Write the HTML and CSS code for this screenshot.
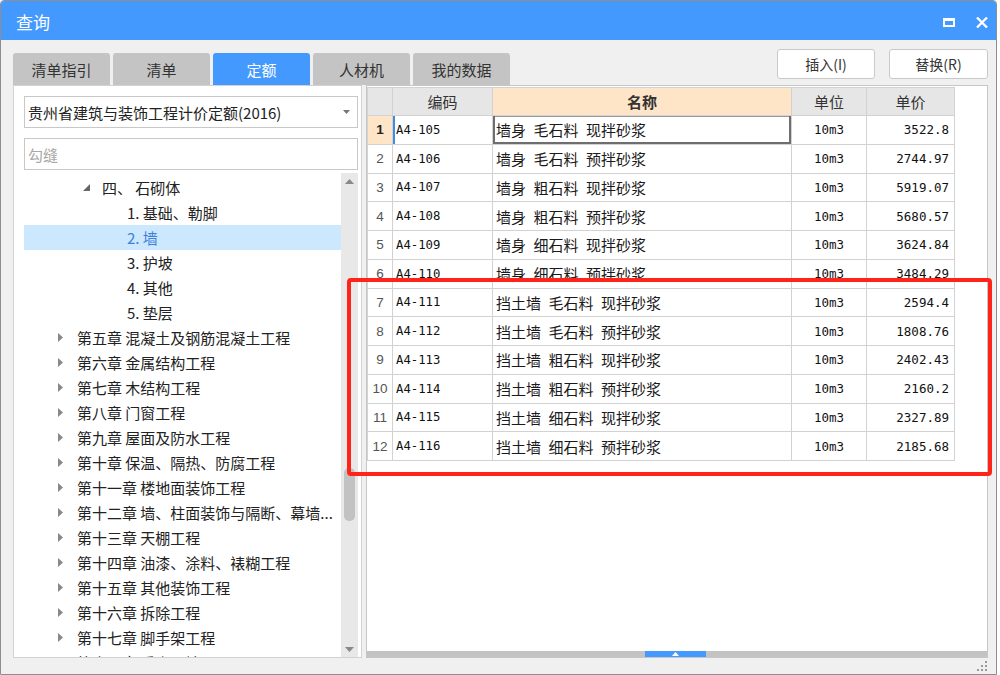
FILE: index.html
```html
<!DOCTYPE html>
<html lang="zh-CN">
<head>
<meta charset="utf-8">
<title>查询</title>
<link rel="stylesheet" href="styles.css">
</head>
<body>
<div class="window">
  <div class="titlebar">
    <span class="title">查询</span>
    <div class="wctrl">
      <svg width="12" height="9" viewBox="0 0 12 9"><rect x="1" y="1" width="10" height="7" fill="none" stroke="#fff" stroke-width="2"/><rect x="0" y="0" width="12" height="3" fill="#fff"/></svg>
      <svg width="12" height="11" viewBox="0 0 12 11"><path d="M1 0.5 L11 10.5 M11 0.5 L1 10.5" stroke="#fff" stroke-width="2.3" fill="none"/></svg>
    </div>
  </div>
  <div class="content">
    <div class="toolbar">
      <div class="tabs">
        <div class="tab">清单指引</div>
        <div class="tab">清单</div>
        <div class="tab active">定额</div>
        <div class="tab">人材机</div>
        <div class="tab">我的数据</div>
      </div>
      <div class="actions">
        <button class="btn">插入(I)</button>
        <button class="btn">替换(R)</button>
      </div>
    </div>
    <div class="main">
      <div class="left">
        <div class="combo">
          <span>贵州省建筑与装饰工程计价定额(2016)</span>
          <svg width="7" height="4" viewBox="0 0 7 4"><path d="M0 0 L7 0 L3.5 4 Z" fill="#777"/></svg>
        </div>
        <div class="search"><span class="ph">勾缝</span></div>
        <div class="treewrap">
          <div class="tree">
            <div class="node l1"><span class="tw"><svg width="7" height="7" viewBox="0 0 7 7"><path d="M7 0 L7 7 L0 7 Z" fill="#666"/></svg></span>四、 石砌体</div>
            <div class="node l2"><span class="tw"></span>1. 基础、勒脚</div>
            <div class="node l2 sel"><span class="tw"></span>2. 墙</div>
            <div class="node l2"><span class="tw"></span>3. 护坡</div>
            <div class="node l2"><span class="tw"></span>4. 其他</div>
            <div class="node l2"><span class="tw"></span>5. 垫层</div>
            <div class="node l0"><span class="tw"><svg width="5" height="9" viewBox="0 0 5 9"><path d="M0 0 L5 4.5 L0 9 Z" fill="#888"/></svg></span>第五章 混凝土及钢筋混凝土工程</div>
            <div class="node l0"><span class="tw"><svg width="5" height="9" viewBox="0 0 5 9"><path d="M0 0 L5 4.5 L0 9 Z" fill="#888"/></svg></span>第六章 金属结构工程</div>
            <div class="node l0"><span class="tw"><svg width="5" height="9" viewBox="0 0 5 9"><path d="M0 0 L5 4.5 L0 9 Z" fill="#888"/></svg></span>第七章 木结构工程</div>
            <div class="node l0"><span class="tw"><svg width="5" height="9" viewBox="0 0 5 9"><path d="M0 0 L5 4.5 L0 9 Z" fill="#888"/></svg></span>第八章 门窗工程</div>
            <div class="node l0"><span class="tw"><svg width="5" height="9" viewBox="0 0 5 9"><path d="M0 0 L5 4.5 L0 9 Z" fill="#888"/></svg></span>第九章 屋面及防水工程</div>
            <div class="node l0"><span class="tw"><svg width="5" height="9" viewBox="0 0 5 9"><path d="M0 0 L5 4.5 L0 9 Z" fill="#888"/></svg></span>第十章 保温、隔热、防腐工程</div>
            <div class="node l0"><span class="tw"><svg width="5" height="9" viewBox="0 0 5 9"><path d="M0 0 L5 4.5 L0 9 Z" fill="#888"/></svg></span>第十一章 楼地面装饰工程</div>
            <div class="node l0"><span class="tw"><svg width="5" height="9" viewBox="0 0 5 9"><path d="M0 0 L5 4.5 L0 9 Z" fill="#888"/></svg></span>第十二章 墙、柱面装饰与隔断、幕墙...</div>
            <div class="node l0"><span class="tw"><svg width="5" height="9" viewBox="0 0 5 9"><path d="M0 0 L5 4.5 L0 9 Z" fill="#888"/></svg></span>第十三章 天棚工程</div>
            <div class="node l0"><span class="tw"><svg width="5" height="9" viewBox="0 0 5 9"><path d="M0 0 L5 4.5 L0 9 Z" fill="#888"/></svg></span>第十四章 油漆、涂料、裱糊工程</div>
            <div class="node l0"><span class="tw"><svg width="5" height="9" viewBox="0 0 5 9"><path d="M0 0 L5 4.5 L0 9 Z" fill="#888"/></svg></span>第十五章 其他装饰工程</div>
            <div class="node l0"><span class="tw"><svg width="5" height="9" viewBox="0 0 5 9"><path d="M0 0 L5 4.5 L0 9 Z" fill="#888"/></svg></span>第十六章 拆除工程</div>
            <div class="node l0"><span class="tw"><svg width="5" height="9" viewBox="0 0 5 9"><path d="M0 0 L5 4.5 L0 9 Z" fill="#888"/></svg></span>第十七章 脚手架工程</div>
            <div class="node l0"><span class="tw"><svg width="5" height="9" viewBox="0 0 5 9"><path d="M0 0 L5 4.5 L0 9 Z" fill="#888"/></svg></span>第十八章 垂直运输</div>
          </div>
          <div class="vscroll">
            <div class="varrow"><svg width="9" height="5" viewBox="0 0 9 5"><path d="M0 5 L4.5 0 L9 5 Z" fill="#888"/></svg></div>
            <div class="vtrack"><div class="vthumb"></div></div>
            <div class="varrow"><svg width="9" height="5" viewBox="0 0 9 5"><path d="M0 0 L9 0 L4.5 5 Z" fill="#888"/></svg></div>
          </div>
        </div>
      </div>
      <div class="right">
        <div class="tablearea">
          <div class="grid">
            <div class="row hdr">
              <div class="cell"></div>
              <div class="cell c">编码</div>
              <div class="cell c selcol">名称</div>
              <div class="cell c">单位</div>
              <div class="cell c">单价</div>
            </div>
            <div class="row">
              <div class="cell num cur">1</div>
              <div class="cell code curcode">A4-105</div>
              <div class="cell name curcell">墙身&ensp;毛石料&ensp;现拌砂浆</div>
              <div class="cell unit">10m3</div>
              <div class="cell price">3522.8</div>
            </div>
            <div class="row">
              <div class="cell num">2</div>
              <div class="cell code">A4-106</div>
              <div class="cell name">墙身&ensp;毛石料&ensp;预拌砂浆</div>
              <div class="cell unit">10m3</div>
              <div class="cell price">2744.97</div>
            </div>
            <div class="row">
              <div class="cell num">3</div>
              <div class="cell code">A4-107</div>
              <div class="cell name">墙身&ensp;粗石料&ensp;现拌砂浆</div>
              <div class="cell unit">10m3</div>
              <div class="cell price">5919.07</div>
            </div>
            <div class="row">
              <div class="cell num">4</div>
              <div class="cell code">A4-108</div>
              <div class="cell name">墙身&ensp;粗石料&ensp;预拌砂浆</div>
              <div class="cell unit">10m3</div>
              <div class="cell price">5680.57</div>
            </div>
            <div class="row">
              <div class="cell num">5</div>
              <div class="cell code">A4-109</div>
              <div class="cell name">墙身&ensp;细石料&ensp;现拌砂浆</div>
              <div class="cell unit">10m3</div>
              <div class="cell price">3624.84</div>
            </div>
            <div class="row">
              <div class="cell num">6</div>
              <div class="cell code">A4-110</div>
              <div class="cell name">墙身&ensp;细石料&ensp;预拌砂浆</div>
              <div class="cell unit">10m3</div>
              <div class="cell price">3484.29</div>
            </div>
            <div class="row">
              <div class="cell num">7</div>
              <div class="cell code">A4-111</div>
              <div class="cell name">挡土墙&ensp;毛石料&ensp;现拌砂浆</div>
              <div class="cell unit">10m3</div>
              <div class="cell price">2594.4</div>
            </div>
            <div class="row">
              <div class="cell num">8</div>
              <div class="cell code">A4-112</div>
              <div class="cell name">挡土墙&ensp;毛石料&ensp;预拌砂浆</div>
              <div class="cell unit">10m3</div>
              <div class="cell price">1808.76</div>
            </div>
            <div class="row">
              <div class="cell num">9</div>
              <div class="cell code">A4-113</div>
              <div class="cell name">挡土墙&ensp;粗石料&ensp;现拌砂浆</div>
              <div class="cell unit">10m3</div>
              <div class="cell price">2402.43</div>
            </div>
            <div class="row">
              <div class="cell num">10</div>
              <div class="cell code">A4-114</div>
              <div class="cell name">挡土墙&ensp;粗石料&ensp;预拌砂浆</div>
              <div class="cell unit">10m3</div>
              <div class="cell price">2160.2</div>
            </div>
            <div class="row">
              <div class="cell num">11</div>
              <div class="cell code">A4-115</div>
              <div class="cell name">挡土墙&ensp;细石料&ensp;现拌砂浆</div>
              <div class="cell unit">10m3</div>
              <div class="cell price">2327.89</div>
            </div>
            <div class="row">
              <div class="cell num">12</div>
              <div class="cell code">A4-116</div>
              <div class="cell name">挡土墙&ensp;细石料&ensp;预拌砂浆</div>
              <div class="cell unit">10m3</div>
              <div class="cell price">2185.68</div>
            </div>
          </div>
        </div>
        <div class="hscroll">
          <div class="hthumb"><svg width="7" height="4" viewBox="0 0 7 4"><path d="M0 4 L3.5 0 L7 4 Z" fill="#fff"/></svg></div>
        </div>
      </div>
    </div>
    <div class="statusbar">
      <svg width="10" height="10" viewBox="0 0 10 10"><rect x="8" y="0" width="2" height="2" fill="#9a9a9a"/><rect x="8" y="4" width="2" height="2" fill="#9a9a9a"/><rect x="4" y="4" width="2" height="2" fill="#9a9a9a"/><rect x="8" y="8" width="2" height="2" fill="#9a9a9a"/><rect x="4" y="8" width="2" height="2" fill="#9a9a9a"/><rect x="0" y="8" width="2" height="2" fill="#9a9a9a"/></svg>
    </div>
  </div>
  <div class="annot"></div>
</div>
</body>
</html>
```

FILE: styles.css
```css
* { box-sizing: border-box; }
html, body { margin: 0; padding: 0; background: #ffffff; }
body {
  font-family: "Noto Sans CJK SC", "Noto Sans", sans-serif;
  color: #222;
}
.window {
  position: relative;
  width: 997px;
  height: 675px;
  border: 1px solid #8e8e8e;
  border-radius: 4px 4px 0 0;
  display: flex;
  flex-direction: column;
  background: #f0f0f0;
  overflow: hidden;
}
.titlebar {
  height: 39px;
  flex: none;
  background: #4499ff;
  color: #fff;
  display: flex;
  align-items: center;
  justify-content: space-between;
  padding: 3px 8px 0 15px;
}
.title { font-size: 17px; line-height: 20px; }
.wctrl { display: flex; align-items: center; gap: 21px; }
.wctrl svg { display: block; }
.content {
  flex: 1;
  display: flex;
  flex-direction: column;
  padding: 0 8px 0 12px;
}
.toolbar {
  height: 45px;
  flex: none;
  display: flex;
  justify-content: space-between;
}
.tabs { display: flex; gap: 3px; align-self: flex-end; }
.tab {
  width: 97px;
  height: 32px;
  background: #c4c4c4;
  border-radius: 3px 3px 0 0;
  font-size: 15px;
  color: #333;
  display: flex;
  align-items: center;
  justify-content: center;
}
.tab.active { background: #4499ff; color: #fff; }
.actions { display: flex; gap: 14px; margin-top: 9px; align-self: flex-start; }
.btn {
  width: 98px;
  height: 30px;
  background: #fff;
  border: 1px solid #c9c9c9;
  border-radius: 3px;
  font-family: "Noto Sans CJK SC", "Noto Sans", sans-serif;
  font-size: 14px;
  color: #333;
  padding: 0;
}
.btn + .btn { width: 99px; }
.main {
  height: 573px;
  flex: none;
  display: flex;
  gap: 4px;
}
.left {
  width: 349px;
  background: #fff;
  border: 1px solid #d2d2d2;
  padding: 10px 3px 0 10px;
  display: flex;
  flex-direction: column;
}
.combo {
  height: 32px;
  border: 1px solid #c8c8c8;
  display: flex;
  align-items: center;
  justify-content: space-between;
  padding: 0 7px 0 3px;
  font-size: 15px;
  color: #222;
}
.combo svg { display: block; }
.search {
  height: 32px;
  margin-top: 10px;
  border: 1px solid #c8c8c8;
  display: flex;
  align-items: center;
  padding-left: 3px;
  font-size: 15px;
}
.ph { color: #a8a8a8; }
.treewrap {
  flex: 1;
  margin-top: 3px;
  display: flex;
  min-height: 0;
}
.tree {
  flex: 1;
  padding-top: 2px;
  overflow: hidden;
}
.node {
  height: 25px;
  display: flex;
  align-items: center;
  white-space: nowrap;
  overflow: hidden;
  font-size: 15px;
  color: #222;
}
.tw { width: 19px; flex: none; display: flex; align-items: center; }
.tw svg { display: block; }
.l0 { padding-left: 34px; }
.l1 { padding-left: 59px; }
.l2 { padding-left: 84px; }
.node.sel { background: #cce8ff; color: #3b7fd9; }
.vscroll {
  width: 17px;
  flex: none;
  background: #e8e8e8;
  display: flex;
  flex-direction: column;
}
.varrow { height: 16px; display: flex; align-items: center; justify-content: center; flex: none; }
.varrow svg { display: block; }
.vtrack { flex: 1; display: flex; justify-content: center; }
.vthumb {
  width: 11px;
  height: 53px;
  margin-top: 279px;
  background: #c2c2c2;
  border-radius: 5px;
}
.right {
  width: 622px;
  background: #fff;
  border: 1px solid #c6c6c6;
  display: flex;
  flex-direction: column;
}
.tablearea { flex: 1; min-height: 0; }
.grid {
  width: 588px;
  margin-top: 1px;
  border-left: 1px solid #d2d2d2;
  border-top: 1px solid #d2d2d2;
}
.row {
  display: grid;
  grid-template-columns: 25px 100px 299px 75px 88px;
  height: 28.75px;
}
.row.hdr { height: 28px; background: #e6e6e6; }
.cell {
  border-right: 1px solid #d2d2d2;
  border-bottom: 1px solid #d2d2d2;
  display: flex;
  align-items: center;
  white-space: nowrap;
  overflow: hidden;
}
.hdr .cell { font-size: 15px; color: #333; }
.c { justify-content: center; }
.hdr .selcol { background: #fee5c8; font-weight: bold; }
.num {
  justify-content: center;
  font-family: "Liberation Sans", Arial, sans-serif;
  font-size: 13.5px;
  color: #555;
}
.num.cur { background: #fee5c8; font-weight: bold; color: #222; }
.code {
  padding-left: 3px;
  font-family: "DejaVu Sans Mono", "Liberation Mono", monospace;
  font-size: 12.3px;
  color: #111;
}
.curcode { box-shadow: inset 2px 0 0 #3a8ee8; }
.name {
  padding-left: 3px;
  font-size: 15px;
  color: #1a1a1a;
}
.curcell { box-shadow: inset 2px 0 0 #6e6e6e, inset -2px 0 0 #6e6e6e, inset 0 -2px 0 #6e6e6e, inset 0 1px 0 #9a9a9a; }
.unit {
  justify-content: center;
  font-family: "DejaVu Sans Mono", "Liberation Mono", monospace;
  font-size: 12.5px;
  color: #111;
}
.price {
  justify-content: flex-end;
  padding-right: 5px;
  font-family: "DejaVu Sans Mono", "Liberation Mono", monospace;
  font-size: 12.5px;
  color: #111;
}
.hscroll {
  height: 6px;
  flex: none;
  background: #c3c3c3;
  display: flex;
}
.hthumb {
  width: 61px;
  margin-left: 278px;
  background: #4499ff;
  display: flex;
  align-items: center;
  justify-content: center;
}
.hthumb svg { display: block; }
.statusbar {
  flex: 1;
  display: flex;
  justify-content: flex-end;
  align-items: flex-end;
  padding: 0 1px 3px 0;
}
.statusbar svg { display: block; }
.annot {
  position: absolute;
  left: 346px;
  top: 277px;
  width: 645px;
  height: 198px;
  border: 4px solid #ff2318;
  border-radius: 4px;
  pointer-events: none;
}
```
